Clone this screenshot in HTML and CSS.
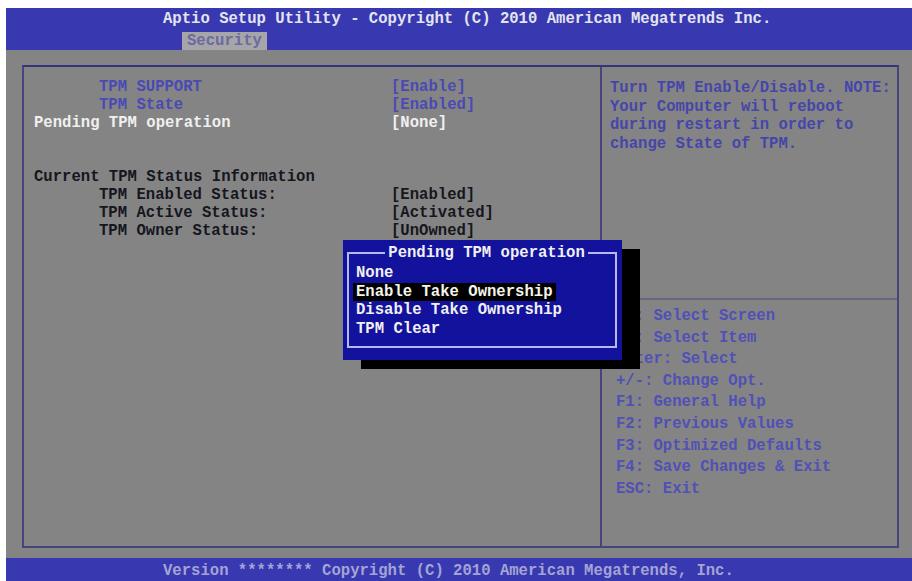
FILE: index.html
```html
<!DOCTYPE html>
<html lang="en">

<head>
   <meta charset="UTF-8">
   <meta name="viewport" content="width=device-width, initial-scale=1.0">
   <title>Aptio Setup Utility</title>
   <link rel="stylesheet" href="styles.css">
</head>

<body>
   <div class="screen">
      <header class="top">
         <div class="title">Aptio Setup Utility - Copyright (C) 2010 American Megatrends Inc.</div>
         <div class="tabs"><span class="tab">Security</span></div>
      </header>

      <main class="main">
         <div class="frame">
            <section class="items">
               <div class="row muted"><span class="label sub">TPM SUPPORT</span><span>[Enable]</span></div>
               <div class="row muted"><span class="label sub">TPM State</span><span>[Enabled]</span></div>
               <div class="row active"><span class="label">Pending TPM operation</span><span>[None]</span></div>
               <div class="row"></div>
               <div class="row"></div>
               <div class="row dark"><span class="label">Current TPM Status Information</span></div>
               <div class="row dark"><span class="label sub">TPM Enabled Status:</span><span>[Enabled]</span></div>
               <div class="row dark"><span class="label sub">TPM Active Status:</span><span>[Activated]</span></div>
               <div class="row dark"><span class="label sub">TPM Owner Status:</span><span>[UnOwned]</span></div>
            </section>

            <aside class="help">
               <div class="desc">
                  Turn TPM Enable/Disable. NOTE:<br>
                  Your Computer will reboot<br>
                  during restart in order to<br>
                  change State of TPM.
               </div>
               <div class="keys">
                  <div>&rarr;&larr;: Select Screen</div>
                  <div>&uarr;&darr;: Select Item</div>
                  <div>Enter: Select</div>
                  <div>+/-: Change Opt.</div>
                  <div>F1: General Help</div>
                  <div>F2: Previous Values</div>
                  <div>F3: Optimized Defaults</div>
                  <div>F4: Save Changes &amp; Exit</div>
                  <div>ESC: Exit</div>
               </div>
            </aside>
         </div>
      </main>

      <footer class="bottom">Version ******** Copyright (C) 2010 American Megatrends, Inc.</footer>

      <!-- janela de opcoes por cima do resto -->
      <div class="popup">
         <div class="pop-title"><span>Pending TPM operation</span></div>
         <div class="pop-list">
            <div class="opt"><span>None</span></div>
            <div class="opt selected"><span>Enable Take Ownership</span></div>
            <div class="opt"><span>Disable Take Ownership</span></div>
            <div class="opt"><span>TPM Clear</span></div>
         </div>
      </div>
   </div>
</body>

</html>
```

FILE: styles.css
```css
html,
body {
   margin: 0;
   background: #fff;
}

body {
   font-family: 'Liberation Mono', 'DejaVu Sans Mono', monospace;
   font-size: 15.6px;
   font-weight: bold;
}

.screen {
   position: relative;
   margin: 8px 0 0 6px;
   width: 906px;
   height: 573px;
   display: flex;
   flex-direction: column;
}

.top {
   background: #3838b0;
   height: 42px;
}

.title {
   line-height: 22px;
   padding-left: 157px;
   color: #e4e4ee;
   white-space: pre;
}

.tabs {
   margin-top: 2px;
   padding-left: 176px;
}

.tab {
   display: inline-block;
   background: #a6a6a8;
   color: #6a6aa0;
   line-height: 18px;
   padding: 0 5px;
}

.main {
   flex: 1;
   background: #848484;
   padding: 15px 13px 10px 16px;
   display: flex;
}

.frame {
   flex: 1;
   border: 2px solid #45457c;
   border-top-color: #34347a;
   display: flex;
}

.items {
   width: 578px;
   box-sizing: border-box;
   border-right: 2px solid #45457c;
   padding: 11px 0 0 10px;
}

.row {
   display: flex;
   height: 18px;
   line-height: 18px;
   white-space: pre;
}

.label {
   width: 357px;
   box-sizing: border-box;
}

.sub {
   padding-left: 65px;
}

.muted {
   color: #4a4ab4;
}

.active {
   color: #f0f0f0;
}

.dark {
   color: #16161e;
}

.help {
   flex: 1;
   display: flex;
   flex-direction: column;
}

.desc {
   height: 233px;
   box-sizing: border-box;
   padding: 12px 4px 0 8px;
   line-height: 18.5px;
   color: #4646aa;
   white-space: nowrap;
   border-bottom: 2px solid #66667e;
}

.keys {
   padding: 6px 0 0 14px;
   line-height: 21.6px;
   color: #5050b6;
   white-space: nowrap;
}

.bottom {
   height: 23px;
   box-sizing: border-box;
   background: #3838b0;
   color: #a4a4d4;
   padding: 3px 0 0 157px;
   line-height: 20px;
   white-space: pre;
}

.popup {
   position: absolute;
   left: 337px;
   top: 232px;
   width: 279px;
   height: 120px;
   box-sizing: border-box;
   padding: 4px 5px 0 4px;
   background: #12129c;
   box-shadow: 18px 9px 0 #000;
   color: #f0f0f0;
}

.pop-title {
   display: flex;
   line-height: 18px;
}

.pop-title::before,
.pop-title::after {
   content: '';
   margin-top: 8px;
   border-top: 2px solid #b8b8ec;
}

.pop-title::before {
   flex: 4;
   border-left: 2px solid #b8b8ec;
}

.pop-title::after {
   flex: 3;
   border-right: 2px solid #b8b8ec;
}

.pop-title span {
   padding: 0 3px;
   white-space: pre;
}

.pop-list {
   border: 2px solid #b8b8ec;
   border-top: none;
   padding: 2px 0 7px 4px;
}

.opt {
   line-height: 18.7px;
   white-space: pre;
}

.opt span {
   display: inline-block;
   padding: 0 3px;
}

.selected span {
   background: #000;
   color: #f4f4e8;
}
```
